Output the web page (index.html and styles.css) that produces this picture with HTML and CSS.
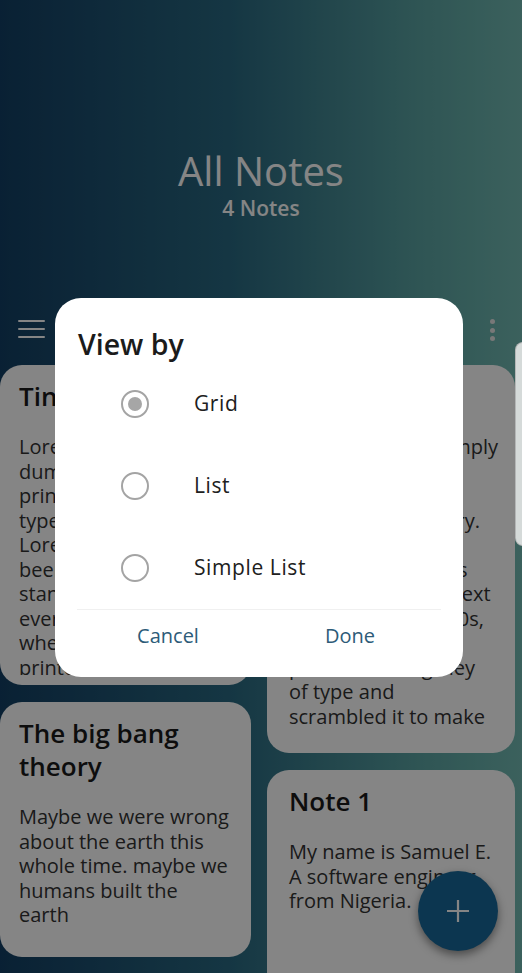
FILE: index.html
```html
<!DOCTYPE html>
<html lang="en">
<head>
<meta charset="utf-8">
<title>All Notes</title>
<link rel="stylesheet" href="styles.css">
</head>
<body>
<div class="app">
  <header class="hero">
    <h1 class="hero-title">All Notes</h1>
    <p class="hero-sub">4 Notes</p>
  </header>
  <nav class="toolbar">
    <span class="hamburger"><i></i><i></i><i></i></span>
    <span class="kebab"><i></i><i></i><i></i></span>
  </nav>
  <main class="grid">
    <div class="col">
      <article class="card card-a">
        <h2 class="card-title">Tiny note</h2>
        <p class="card-body clip-a">Lorem Ipsum is simply
dummy text of the
printing and
typesetting industry.
Lorem Ipsum has
been the industry's
standard dummy text
ever since the 1500s,
when an unknown
printer took a galley
of type and
scrambled it to make
a type specimen book.</p>
      </article>
      <article class="card">
        <h2 class="card-title">The big bang theory</h2>
        <p class="card-body">Maybe we were wrong
about the earth this
whole time. maybe we
humans built the
earth</p>
      </article>
    </div>
    <div class="col">
      <article class="card card-b">
        <h2 class="card-title">Lorem Ipsum</h2>
        <p class="card-body clip-b">Lorem Ipsum is simply
dummy text of the
printing and
typesetting industry.
Lorem Ipsum has
been the industry's
standard dummy text
ever since the 1500s,
when an unknown
printer took a galley
of type and
scrambled it to make
a type specimen book.</p>
      </article>
      <article class="card card-c">
        <h2 class="card-title">Note 1</h2>
        <p class="card-body">My name is Samuel E.
A software engineer
from Nigeria.</p>
      </article>
    </div>
  </main>
  <button class="fab" aria-label="Add note">
    <svg width="24" height="24" viewBox="0 0 24 24"><path d="M12 1v22M1 12h22" stroke="#fff" stroke-width="2.2" fill="none"/></svg>
  </button>
</div>

<div class="scrim"></div>
<div class="edge-handle"></div>

<div class="dialog" role="dialog">
  <h3 class="dialog-title">View by</h3>
  <ul class="options">
    <li class="option"><span class="radio checked"></span><span class="option-label">Grid</span></li>
    <li class="option"><span class="radio"></span><span class="option-label">List</span></li>
    <li class="option"><span class="radio"></span><span class="option-label">Simple List</span></li>
  </ul>
  <div class="divider"></div>
  <div class="actions">
    <button class="action">Cancel</button>
    <button class="action">Done</button>
  </div>
</div>
</body>
</html>
```

FILE: styles.css
```css
* { box-sizing: border-box; }
html, body {
  margin: 0;
  padding: 0;
  width: 522px;
  height: 973px;
  overflow: hidden;
}
body {
  font-family: "Open Sans", "Noto Sans", sans-serif;
  background: linear-gradient(to right, #133f64 0%, #2a6a82 45%, #5aa3a2 80%, #72bab2 100%);
  position: relative;
}
.app {
  width: 522px;
  height: 973px;
}
.hero {
  height: 305px;
  padding-top: 146px;
  text-align: center;
  color: #fff;
}
.hero-title {
  margin: 0;
  font-size: 40px;
  font-weight: 400;
  line-height: 50px;
}
.hero-sub {
  margin: -1px 0 0;
  font-size: 21px;
  font-weight: 600;
  line-height: 26px;
}
.toolbar {
  height: 48px;
  margin-bottom: 12px;
  padding: 0 27px 0 18px;
  display: flex;
  align-items: center;
  justify-content: space-between;
}
.hamburger {
  display: flex;
  flex-direction: column;
  gap: 5.5px;
  width: 27px;
}
.hamburger i {
  display: block;
  height: 2.5px;
  background: #fff;
  border-radius: 1px;
}
.kebab {
  display: flex;
  flex-direction: column;
  gap: 3.5px;
  margin-top: 2px;
}
.kebab i {
  display: block;
  width: 5px;
  height: 5px;
  border-radius: 50%;
  background: #e6e6e6;
}
.grid {
  display: grid;
  grid-template-columns: 251px 248px;
  column-gap: 16px;
  align-items: start;
}
.col {
  display: flex;
  flex-direction: column;
  gap: 17px;
}
.card {
  background: #fff;
  border-radius: 22px;
  padding: 15px 8px 29px 19px;
  color: #262626;
  overflow: hidden;
}
.col + .col .card { padding-left: 22px; padding-right: 6px; }
.card-a { height: 320px; }
.card-b { height: 388px; }
.card-c { height: 240px; }
.card-title {
  margin: 0;
  font-size: 26px;
  font-weight: 600;
  line-height: 33px;
  color: #1a1a1a;
}
.card-body {
  margin: 22px 0 0;
  font-size: 20px;
  line-height: 24.5px;
  color: #333;
  white-space: pre-line;
}
.clip-a { max-height: 240px; overflow: hidden; }
.clip-b { max-height: 294px; overflow: hidden; }
.fab {
  position: absolute;
  left: 418px;
  top: 871px;
  width: 80px;
  height: 80px;
  border-radius: 50%;
  border: 0;
  background: #18699a;
  display: flex;
  align-items: center;
  justify-content: center;
  box-shadow: 0 4px 10px rgba(0,0,0,0.45);
  padding: 0;
}
.scrim {
  position: absolute;
  inset: 0;
  background: rgba(0, 0, 0, 0.48);
}
.edge-handle {
  position: absolute;
  left: 515px;
  top: 342px;
  width: 10px;
  height: 204px;
  border-radius: 8px 0 0 8px;
  background: rgba(235, 235, 235, 0.88);
  border: 1px solid rgba(160,160,160,0.6);
}
.dialog {
  position: absolute;
  left: 55px;
  top: 298px;
  width: 408px;
  height: 379px;
  background: #fff;
  border-radius: 26px;
  padding: 27px 22px 16px;
}
.dialog-title {
  margin: 0 0 0 1px;
  font-size: 28.5px;
  font-weight: 600;
  line-height: 38px;
  color: #1b1b1b;
}
.options {
  list-style: none;
  margin: 0;
  padding: 0;
}
.option {
  height: 82px;
  display: flex;
  align-items: center;
  padding-left: 44px;
}
.radio {
  width: 28px;
  height: 28px;
  border-radius: 50%;
  border: 2.5px solid #a4a4a4;
  display: flex;
  align-items: center;
  justify-content: center;
  flex: none;
}
.radio.checked::after {
  content: "";
  width: 14px;
  height: 14px;
  border-radius: 50%;
  background: #a6a6a6;
}
.option-label {
  margin-left: 45px;
  margin-top: -2px;
  font-size: 21px;
  letter-spacing: 0.6px;
  color: #202020;
}
.divider {
  height: 1px;
  background: #f0f0f0;
}
.actions {
  display: flex;
  height: 52px;
}
.action {
  flex: 1;
  border: 0;
  background: none;
  font-family: inherit;
  font-size: 20px;
  color: #2d5b78;
  padding: 0 0 1px;
}
```
